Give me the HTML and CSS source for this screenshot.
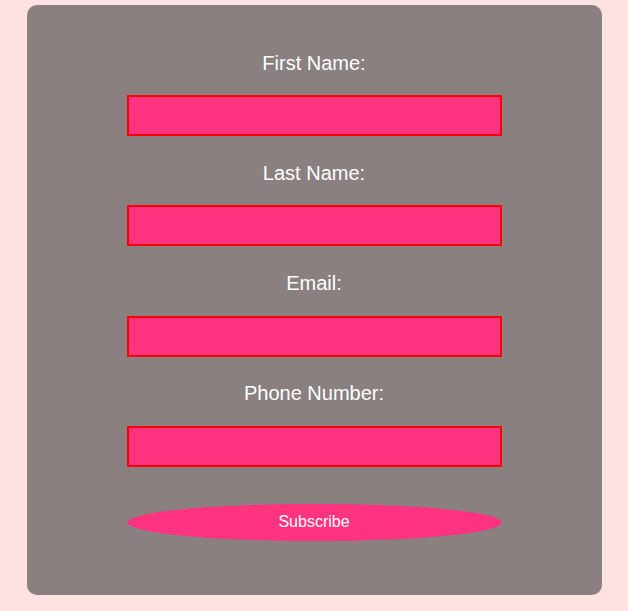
FILE: index.html
```html
<!DOCTYPE html>
<html>
<head>
<meta charset="utf-8">
<link rel="stylesheet" href="styles.css">
</head>
<body>
<form class="card">
  <label class="label" for="fn">First Name:</label>
  <input class="field" id="fn" type="text">
  <label class="label" for="ln">Last Name:</label>
  <input class="field" id="ln" type="text">
  <label class="label" for="em">Email:</label>
  <input class="field" id="em" type="text">
  <label class="label" for="ph">Phone Number:</label>
  <input class="field" id="ph" type="text">
  <button class="btn" type="button">Subscribe</button>
</form>
</body>
</html>
```
FILE: styles.css
```css
html, body {
  margin: 0;
  padding: 0;
  background: #ffe1e1;
}
body {
  padding-top: 5px;
  font-family: "Liberation Sans", Arial, sans-serif;
}
.card {
  box-sizing: border-box;
  width: 575px;
  height: 590px;
  margin: 0 auto;
  background: #8a8080;
  border-radius: 10px;
  display: flex;
  flex-direction: column;
  align-items: center;
  padding-top: 46.5px;
}
.label {
  color: #ffffff;
  font-size: 20px;
  line-height: 23px;
  margin-bottom: 20.5px;
}
.field {
  box-sizing: border-box;
  width: 375px;
  height: 41px;
  background: #ff3380;
  border: 2px solid #ff0000;
  margin: 0 0 25.8px 0;
  padding: 0;
  outline: none;
}
.field:last-of-type {
  margin-bottom: 36.7px;
}
.btn {
  box-sizing: border-box;
  width: 375px;
  height: 37.5px;
  border: none;
  border-radius: 50%;
  background: #ff3380;
  color: #ffffff;
  font-family: "Liberation Sans", Arial, sans-serif;
  font-size: 16px;
  padding: 0;
}
```
